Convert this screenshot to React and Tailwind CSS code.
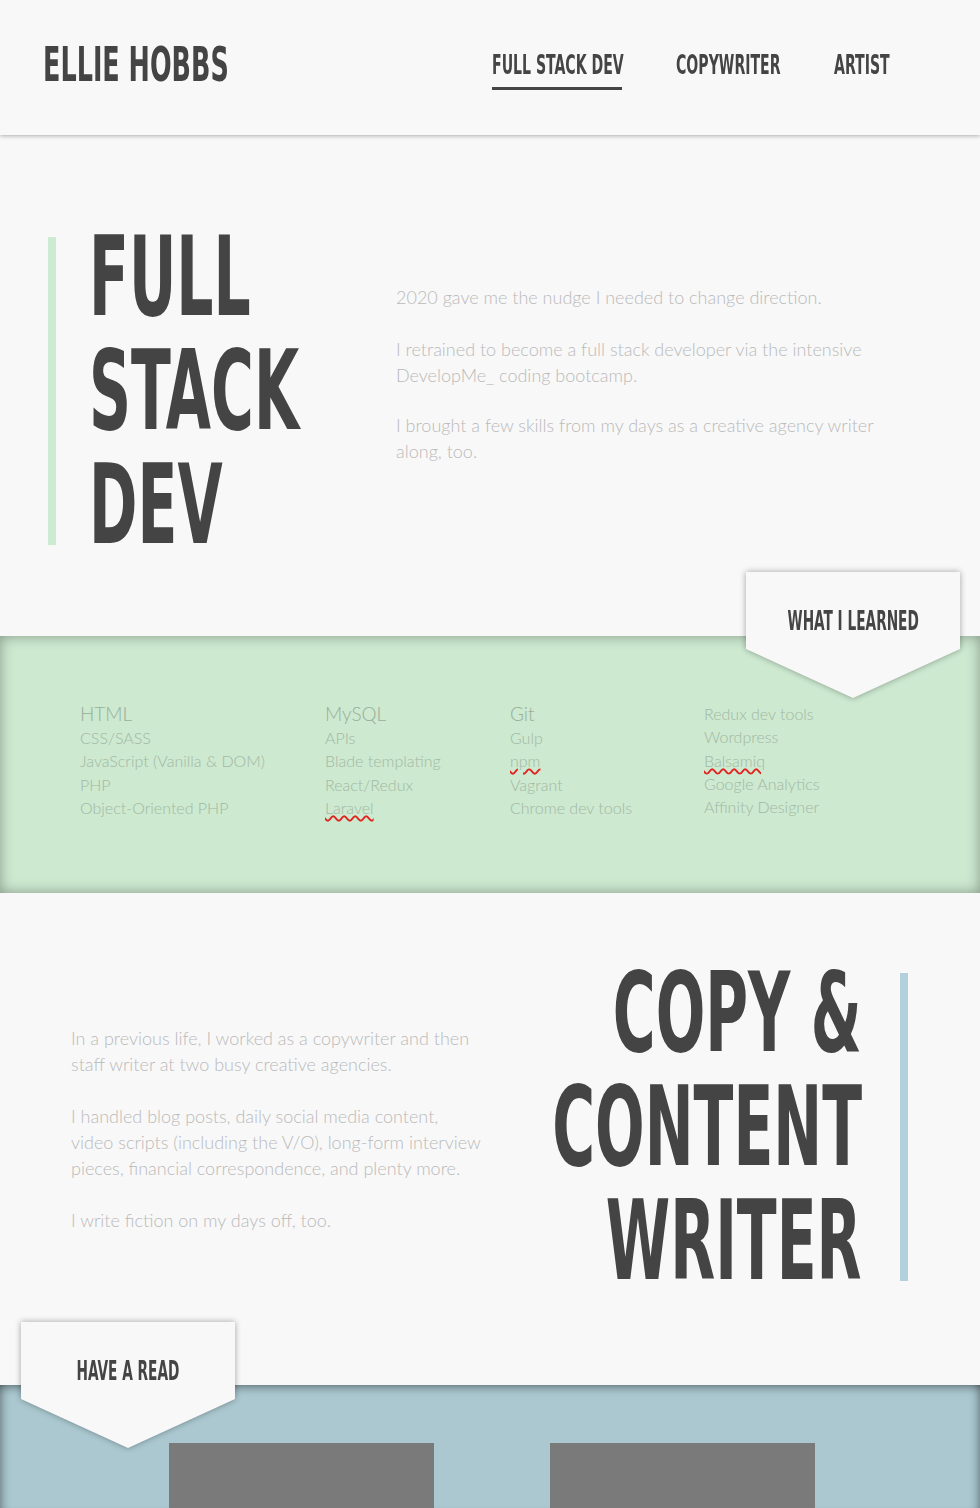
const display =
  "font-['Liberation_Sans_Narrow','DejaVu_Sans_Condensed',sans-serif] font-bold text-[#444]";
const body = "font-['Lato','Open_Sans',sans-serif] font-light";

const fullStack = [
  ["HTML", "CSS/SASS", "JavaScript (Vanilla & DOM)", "PHP", "Object-Oriented PHP"],
  ["MySQL", "APIs", "Blade templating", "React/Redux", "Laravel"],
  ["Git", "Gulp", "npm", "Vagrant", "Chrome dev tools"],
  ["Redux dev tools", "Wordpress", "Balsamiq", "Google Analytics", "Affinity Designer"],
];
const squiggly = ["Laravel", "npm", "Balsamiq"];
const colWidths = ["w-[245px]", "w-[185px]", "w-[194px]", "w-[200px]"];

function Squish({ children, className = "" }) {
  return <span className={`inline-block whitespace-nowrap ${className}`}>{children}</span>;
}

function Tab({ label, className }) {
  return (
    <div className={`absolute w-[214px] h-[126px] drop-shadow-[0_0_3px_rgba(0,0,0,0.35)] ${className}`}>
      <div className="w-full h-full bg-[#f8f8f8] [clip-path:polygon(0_0,100%_0,100%_77px,50%_126px,0_77px)]">
        <div className={`${display} pt-[40px] h-[59px] leading-[19px] text-[26px] flex justify-center`}>
          <Squish className="scale-x-[0.585]">{label}</Squish>
        </div>
      </div>
    </div>
  );
}

function Header() {
  const links = [
    ["FULL STACK DEV", "w-[130px]", true],
    ["COPYWRITER", "w-[104px]", false],
    ["ARTIST", "w-[57px]", false],
  ];
  return (
    <header className="relative z-20 h-[135px] bg-[#f8f8f8] shadow-[0_1px_4px_rgba(0,0,0,0.3)] flex justify-between pl-[43px] pr-[89px]">
      <div className={`${display} pt-[47px] w-[186px] h-[35px] leading-[35px] text-[48px] box-content`}>
        <Squish className="origin-left scale-x-[0.59]">ELLIE HOBBS</Squish>
      </div>
      <nav className="flex gap-[54px] pt-[55px]">
        {links.map(([label, w, active]) => (
          <a
            key={label}
            href="#"
            className={`${display} ${w} h-[20px] leading-[20px] text-[27px] pb-[12px] box-content ${
              active ? "border-b-[3px] border-[#444]" : ""
            }`}
          >
            <Squish className="origin-left scale-x-[0.58]">{label}</Squish>
          </a>
        ))}
      </nav>
    </header>
  );
}

export default function App() {
  return (
    <div className="bg-[#f8f8f8] min-h-[1508px] w-[980px] overflow-hidden">
      <Header />

      {/* full stack intro */}
      <section className="h-[501px] flex pt-[102px]">
        <div className={`${display} ml-[48px] w-[300px] h-[308px] border-l-[8px] border-[#cdebd2] pl-[33px] flex flex-col gap-[34px] text-[110px]`}>
          {["FULL", "STACK", "DEV"].map((w) => (
            <div key={w} className="h-[80px] leading-[80px]">
              <Squish className="origin-left scale-x-[0.59]">{w}</Squish>
            </div>
          ))}
        </div>
        <div className={`${body} ml-[48px] w-[490px] pt-[47px] text-[18px] leading-[26px] text-[#bababa]`}>
          <p className="mb-[26px]">2020 gave me the nudge I needed to change direction.</p>
          <p className="mb-[24px]">
            I retrained to become a full stack developer via the intensive DevelopMe_ coding bootcamp.
          </p>
          <p>I brought a few skills from my days as a creative agency writer along, too.</p>
        </div>
      </section>

      {/* what I learned */}
      <section className="relative z-10 h-[257px] bg-[#cde9d0] shadow-[inset_0_0_14px_rgba(0,0,0,0.35)] flex pl-[80px] pt-[66px]">
        <Tab label="WHAT I LEARNED" className="-top-[64px] right-[20px]" />
        {fullStack.map((col, i) => (
          <ul key={i} className={`${body} ${colWidths[i]} text-[16px] leading-[23.3px] text-[#a2b8a4]`}>
            {col.map((item, j) => (
              <li
                key={item}
                className={j === 0 && i < 3 ? "text-[19px] leading-[24px] text-[#98ae9a]" : ""}
              >
                {squiggly.includes(item) ? (
                  <span className="underline decoration-wavy decoration-[#e2231f] decoration-2 underline-offset-[1px]">
                    {item}
                  </span>
                ) : (
                  item
                )}
              </li>
            ))}
          </ul>
        ))}
      </section>

      {/* copy & content */}
      <section className="h-[492px] flex justify-between">
        <div className={`${body} ml-[71px] w-[410px] pt-[132px] text-[18px] leading-[26px] text-[#bababa] flex flex-col gap-[26px]`}>
          <p>In a previous life, I worked as a copywriter and then staff writer at two busy creative agencies.</p>
          <p>
            I handled blog posts, daily social media content, video scripts (including the V/O), long-form
            interview pieces, financial correspondence, and plenty more.
          </p>
          <p>I write fiction on my days off, too.</p>
        </div>
        <div className="mt-[80px] mr-[72px] self-start flex">
          <div className={`${display} w-[320px] flex flex-col gap-[34px] text-[110px]`}>
            {["COPY &", "CONTENT", "WRITER"].map((w) => (
              <div key={w} className="h-[80px] leading-[80px] flex justify-end">
                <Squish className="origin-right scale-x-[0.59]">{w}</Squish>
              </div>
            ))}
          </div>
          <div className="ml-[38px] w-[8px] bg-[#b3d1dc]" />
        </div>
      </section>

      {/* have a read */}
      <section className="relative z-10 h-[123px] bg-[#abc8d0] shadow-[inset_0_8px_10px_-6px_rgba(0,0,0,0.45),inset_10px_0_10px_-8px_rgba(0,0,0,0.35),inset_-10px_0_10px_-8px_rgba(0,0,0,0.35)] flex justify-center gap-[116px] pl-[4px] pt-[58px]">
        <Tab label="HAVE A READ" className="-top-[63px] left-[21px]" />
        <div className="w-[265px] h-[65px] bg-[#7a7a7a]" />
        <div className="w-[265px] h-[65px] bg-[#7a7a7a]" />
      </section>
    </div>
  );
}
